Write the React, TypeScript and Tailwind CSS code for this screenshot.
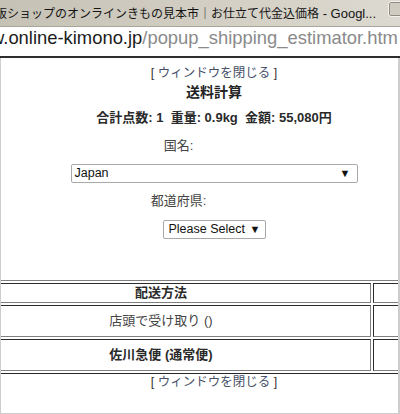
export default function App() {
  const nb = '\u00a0';
  return (
    <div className="w-[400px] h-[414px] overflow-hidden bg-white flex flex-col">
      {/* title bar */}
      <div className="relative h-[27px] shrink-0 bg-gradient-to-r from-[#c5c1b5] via-[#d2cec3] to-[#dcd9d0] border-b border-[#a9a59b] flex items-center overflow-hidden whitespace-nowrap">
        <span className="ml-[-5px] text-[12px] leading-none text-[#141414] font-['Noto_Sans_CJK_JP',sans-serif]">
          販ショップのオンラインきもの見本市｜お仕立て代金込価格
          <span className="font-['Liberation_Sans',sans-serif] text-[13px]">{' - Googl...'}</span>
        </span>
        <div className="absolute left-[388px] top-[1px] w-[22px] h-[16px] rounded-[3px] border border-[#f3f1eb] bg-[#cfcbc0] shadow-[inset_0_0_0_1px_#8f8b82]" />
      </div>
      {/* url bar */}
      <div className="h-[31px] shrink-0 bg-white border-b-2 border-[#2e2e2e] pt-[1px] overflow-hidden whitespace-nowrap">
        <div className="ml-[-9px] text-[18.4px] leading-[20px] font-['Liberation_Sans',sans-serif]">
          <span className="text-[#1c1c1c]">w.online-kimono.jp</span>
          <span className="text-[#8a8a8a]">/popup_shipping_estimator.htm</span>
        </div>
      </div>
      {/* page */}
      <div className="flex-1 border-l border-r-2 border-b border-[#cdcdcd] overflow-hidden">
        <div className="ml-[-53px] w-[532px] flex flex-col items-center font-['Liberation_Sans','Noto_Sans_CJK_JP',sans-serif] text-[#333]">
          <div className="mt-[7px] leading-[16px] text-[12.5px] whitespace-nowrap">
            <span className="text-[#333]">[ </span>
            <span className="text-[#465068]">ウィンドウを閉じる</span>
            <span className="text-[#333]"> ]</span>
          </div>
          <div className="mt-[2px] leading-[18px] text-[14px] font-bold text-[#222]">送料計算</div>
          <div className="mt-[9px] leading-[16px] text-[13px] font-bold text-[#2a2a2a] whitespace-nowrap">
            {`合計点数: 1${nb}${nb}重量: 0.9kg${nb}${nb}金額: 55,080円`}
          </div>
          <div className="mt-[12px] leading-[16px] text-[13px] text-[#444] pr-[71px]">国名:</div>
          <div className="mt-[10px] w-[287px] h-[19px] border border-[#a9a9a9] rounded-[2px] flex items-center justify-between pl-[3px] pr-[6px] text-[12.5px] text-[#111]">
            <span className="leading-none">Japan</span>
            <span className="text-[11px] leading-none text-[#111]">▼</span>
          </div>
          <div className="mt-[10px] leading-[16px] text-[13px] text-[#444] pr-[71px]">都道府県:</div>
          <div className="mt-[11px] w-[103px] h-[19px] border border-[#a9a9a9] rounded-[2px] flex items-center justify-between pl-[5px] pr-[4px] text-[12.5px] text-[#111]">
            <span className="leading-none">Please Select</span>
            <span className="text-[11px] leading-none text-[#111]">▼</span>
          </div>
          <div className="mt-[41px] self-stretch border border-t-[#808080] border-l-[#808080] border-b-[#262626] border-r-[#262626] p-[2px] grid grid-cols-[420px_1fr] gap-[2px]">
            <div className="h-[20px] border border-t-[#2c2c2c] border-l-[#2c2c2c] border-b-[#808080] border-r-[#808080] flex items-center justify-center text-[13px] font-bold text-[#2a2a2a]">配送方法</div>
            <div className="h-[20px] border border-t-[#2c2c2c] border-l-[#2c2c2c] border-b-[#808080] border-r-[#808080]" />
            <div className="h-[32px] border border-t-[#2c2c2c] border-l-[#2c2c2c] border-b-[#808080] border-r-[#808080] flex items-center justify-center text-[13px] text-[#444]">店頭で受け取り ()</div>
            <div className="h-[32px] border border-t-[#2c2c2c] border-l-[#2c2c2c] border-b-[#808080] border-r-[#808080]" />
            <div className="h-[32px] border border-t-[#2c2c2c] border-l-[#2c2c2c] border-b-[#808080] border-r-[#808080] flex items-center justify-center text-[13px] font-bold text-[#2a2a2a]">佐川急便 (通常便)</div>
            <div className="h-[32px] border border-t-[#2c2c2c] border-l-[#2c2c2c] border-b-[#808080] border-r-[#808080]" />
          </div>
          <div className="leading-[16px] text-[12.5px] whitespace-nowrap">
            <span className="text-[#333]">[ </span>
            <span className="text-[#465068]">ウィンドウを閉じる</span>
            <span className="text-[#333]"> ]</span>
          </div>
        </div>
      </div>
    </div>
  );
}
